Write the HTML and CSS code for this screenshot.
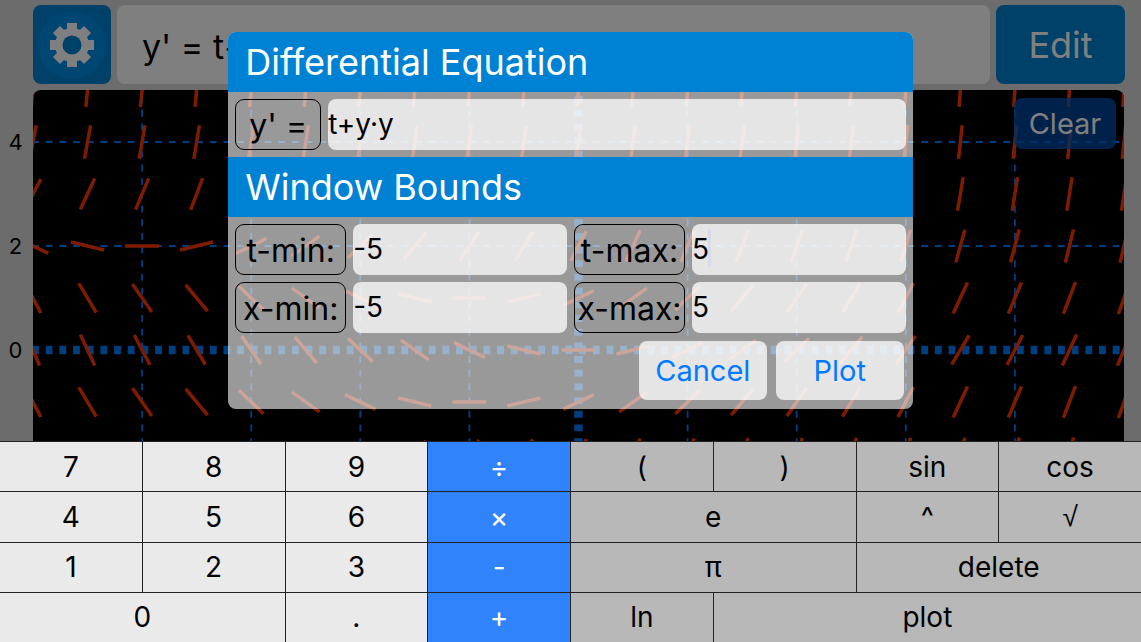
FILE: index.html
```
<!DOCTYPE html>
<html lang="en">
<head>
<meta charset="utf-8">
<meta name="viewport" content="width=device-width, initial-scale=1">
<title>Slope Field</title>
<link rel="stylesheet" href="styles.css">
</head>
<body>
<div class="app">
  <main class="workspace">
    <div class="toolbar">
      <button class="settings" type="button" aria-label="Settings">
        <svg class="gear" viewBox="-39 -39 78 78" aria-hidden="true">
          <circle class="gear-disc" r="34"/>
          <g class="gear-teeth">
            <rect x="-5" y="-22" width="10" height="44"/>
            <rect x="-5" y="-22" width="10" height="44" transform="rotate(45)"/>
            <rect x="-5" y="-22" width="10" height="44" transform="rotate(90)"/>
            <rect x="-5" y="-22" width="10" height="44" transform="rotate(135)"/>
            <circle r="17"/>
          </g>
          <circle class="gear-hole" r="9.5"/>
        </svg>
      </button>
      <div class="equation">y' = t+</div>
      <button class="edit" type="button">Edit</button>
    </div>
    <div class="graph">
      <div class="axis"><span>4</span><span>2</span><span>0</span><span>-2</span><span>-4</span></div>
      <div class="plot">
        <svg class="field" id="field" aria-label="Slope field"></svg>
        <button class="clear" type="button">Clear</button>
      </div>
    </div>
  </main>
  <div class="backdrop"></div>
  <form class="dialog">
    <h2 class="dialog-title">Differential Equation</h2>
    <div class="fields fields-equation">
      <label class="tag tag-short" for="eq">y' =</label>
      <input class="value" id="eq" type="text" value="t+y·y">
    </div>
    <h2 class="dialog-title">Window Bounds</h2>
    <div class="fields">
      <label class="tag" for="tmin">t-min:</label>
      <input class="value" id="tmin" type="text" value="-5">
      <label class="tag" for="tmax">t-max:</label>
      <input class="value value-active" id="tmax" type="text" value="5">
    </div>
    <div class="fields">
      <label class="tag" for="xmin">x-min:</label>
      <input class="value" id="xmin" type="text" value="-5">
      <label class="tag" for="xmax">x-max:</label>
      <input class="value" id="xmax" type="text" value="5">
    </div>
    <div class="actions">
      <button class="action" type="button">Cancel</button>
      <button class="action" type="button">Plot</button>
    </div>
  </form>
  <div class="keyboard">
    <button class="key" type="button">7</button>
    <button class="key" type="button">8</button>
    <button class="key" type="button">9</button>
    <button class="key op" type="button">÷</button>
    <button class="key fn" type="button">(</button>
    <button class="key fn" type="button">)</button>
    <button class="key fn" type="button">sin</button>
    <button class="key fn" type="button">cos</button>
    <button class="key" type="button">4</button>
    <button class="key" type="button">5</button>
    <button class="key" type="button">6</button>
    <button class="key op" type="button">×</button>
    <button class="key fn wide" type="button">e</button>
    <button class="key fn" type="button">^</button>
    <button class="key fn root" type="button">√</button>
    <button class="key" type="button">1</button>
    <button class="key" type="button">2</button>
    <button class="key" type="button">3</button>
    <button class="key op" type="button">-</button>
    <button class="key fn wide" type="button">π</button>
    <button class="key fn wide" type="button">delete</button>
    <button class="key wide" type="button">0</button>
    <button class="key" type="button">.</button>
    <button class="key op" type="button">+</button>
    <button class="key fn" type="button">ln</button>
    <button class="key fn widest" type="button">plot</button>
  </div>
</div>
<script src="field.js"></script>
</body>
</html>
```
FILE: styles.css
```
* {
  box-sizing: border-box;
}

body {
  margin: 0;
  font-family: Inter, "Liberation Sans", sans-serif;
  color: #000;
}

button,
input {
  font: inherit;
  color: inherit;
  border: 0;
  margin: 0;
  padding: 0;
}

.app {
  position: relative;
  height: 100vh;
  overflow: hidden;
}

.workspace {
  display: flex;
  flex-direction: column;
  gap: 6px;
  height: 100%;
  padding: 5px 0 32px;
  background: #d8d8d8;
}

.toolbar {
  display: flex;
  gap: 6px;
  height: 79px;
  padding: 0 16px 0 33px;
}

.settings,
.edit {
  background: #0082d4;
  border-radius: 8px;
}

.settings {
  width: 78px;
}

.gear {
  display: block;
  width: 100%;
}

.gear-disc {
  fill: #008ce6;
}

.gear-hole {
  fill: #0082d4;
}

.gear-teeth {
  fill: #fff;
}

.equation {
  flex: 1;
  padding: 0 25px;
  background: #fff;
  border-radius: 8px;
  font-size: 34px;
  line-height: 84px;
}

.edit {
  width: 129px;
  color: #fff;
  font-size: 36px;
}

.graph {
  display: flex;
  flex: 1;
  padding-right: 17px;
}

.axis {
  display: grid;
  grid-auto-rows: 1fr;
  align-items: center;
  width: 33px;
  padding-right: 2px;
  text-align: center;
  font-size: 22px;
}

.plot {
  position: relative;
  flex: 1;
  background: #000;
  border-radius: 8px;
  overflow: hidden;
}

.field {
  display: block;
  width: 100%;
  height: 100%;
}

.grid-line {
  stroke: #007eff;
  stroke-width: 1.8;
  stroke-dasharray: 6.84;
}

.axis-line {
  stroke-width: 8.5;
}

.slope {
  stroke: #ff3800;
  stroke-width: 3.5;
}

.clear {
  position: absolute;
  top: 8px;
  right: 8px;
  width: 102px;
  height: 51px;
  background: rgba(0, 90, 195, 0.75);
  border-radius: 8px;
  color: #fff;
  font-size: 29px;
}

.backdrop {
  position: absolute;
  inset: 0;
  background: rgba(0, 0, 0, 0.5);
}

.dialog {
  position: absolute;
  top: 32px;
  left: 20%;
  width: 60%;
  padding-bottom: 9px;
  background: rgba(255, 255, 255, 0.6);
  border-radius: 8px;
  overflow: hidden;
}

.dialog-title {
  margin: 0;
  padding-left: 17px;
  background: #0082d4;
  color: #fff;
  font-size: 36px;
  font-weight: 400;
  line-height: 60px;
}

.fields {
  display: flex;
  gap: 7px;
  padding: 7px 7px 0;
}

.fields-equation {
  padding-bottom: 7px;
}

.tag {
  flex: none;
  width: 111px;
  height: 51px;
  border: 1px solid #000;
  border-radius: 9px;
  text-align: center;
  white-space: nowrap;
  font-size: 32px;
  line-height: 51px;
}

.tag-short {
  width: 86px;
}

.value {
  flex: 1;
  min-width: 0;
  height: 51px;
  padding-bottom: 2px;
  background-color: rgba(255, 255, 255, 0.75);
  border-radius: 8px;
  font-size: 28px;
}

.value-active {
  background-image: linear-gradient(#d9d9ea, #d9d9ea);
  background-size: 3px 38px;
  background-position: 16px 5px;
  background-repeat: no-repeat;
}

.actions {
  display: flex;
  justify-content: flex-end;
  gap: 9px;
  padding: 8px 9px 0;
}

.action {
  width: 128px;
  height: 59px;
  background: rgba(255, 255, 255, 0.75);
  border-radius: 8px;
  color: #007aff;
  font-size: 29px;
}

.keyboard {
  position: absolute;
  left: 0;
  right: 0;
  bottom: 0;
  display: grid;
  grid-template-columns: repeat(8, 1fr);
  grid-auto-rows: 1fr;
  gap: 1px;
  height: 201px;
  padding-top: 1px;
  background: #222;
}

.key {
  background: #eaeaea;
  font-size: 28px;
}

.fn {
  background: #b8b8b8;
}

.op {
  background: #3083fb;
  color: #fff;
}

.root {
  font-family: "Liberation Sans", sans-serif;
}

.wide {
  grid-column: span 2;
}

.widest {
  grid-column: span 3;
}
```
FILE: field.js
```
const svg = document.getElementById("field");
const bounds = { tMin: -5, tMax: 5, yMin: -5, yMax: 5 };
const SEGMENT = 34;

function slopeAt(t, y) {
  return t + y * y;
}

function addLine(x1, y1, x2, y2, name) {
  const line = document.createElementNS("http://www.w3.org/2000/svg", "line");
  line.setAttribute("x1", x1);
  line.setAttribute("y1", y1);
  line.setAttribute("x2", x2);
  line.setAttribute("y2", y2);
  line.setAttribute("class", name);
  svg.appendChild(line);
}

function draw() {
  const w = svg.clientWidth;
  const h = svg.clientHeight;
  const sx = w / (bounds.tMax - bounds.tMin);
  const sy = h / (bounds.yMax - bounds.yMin);
  svg.replaceChildren();

  for (let t = bounds.tMin + 1; t < bounds.tMax; t++) {
    const x = (t - bounds.tMin) * sx;
    addLine(x, -7.5, x, h, t === 0 ? "grid-line axis-line" : "grid-line");
  }
  for (let y = -4; y <= 4; y += 2) {
    const py = (bounds.yMax - y) * sy;
    addLine(-1, py, w, py, y === 0 ? "grid-line axis-line" : "grid-line");
  }
  for (let t = bounds.tMin; t <= bounds.tMax; t += 0.5) {
    for (let y = bounds.yMin; y <= bounds.yMax; y++) {
      const angle = Math.atan(slopeAt(t, y) * sy / sx);
      const dx = Math.cos(angle) * SEGMENT / 2;
      const dy = Math.sin(angle) * SEGMENT / 2;
      const px = (t - bounds.tMin) * sx;
      const py = (bounds.yMax - y) * sy;
      addLine(px - dx, py + dy, px + dx, py - dy, "slope");
    }
  }
}

draw();
window.addEventListener("resize", draw);
```
